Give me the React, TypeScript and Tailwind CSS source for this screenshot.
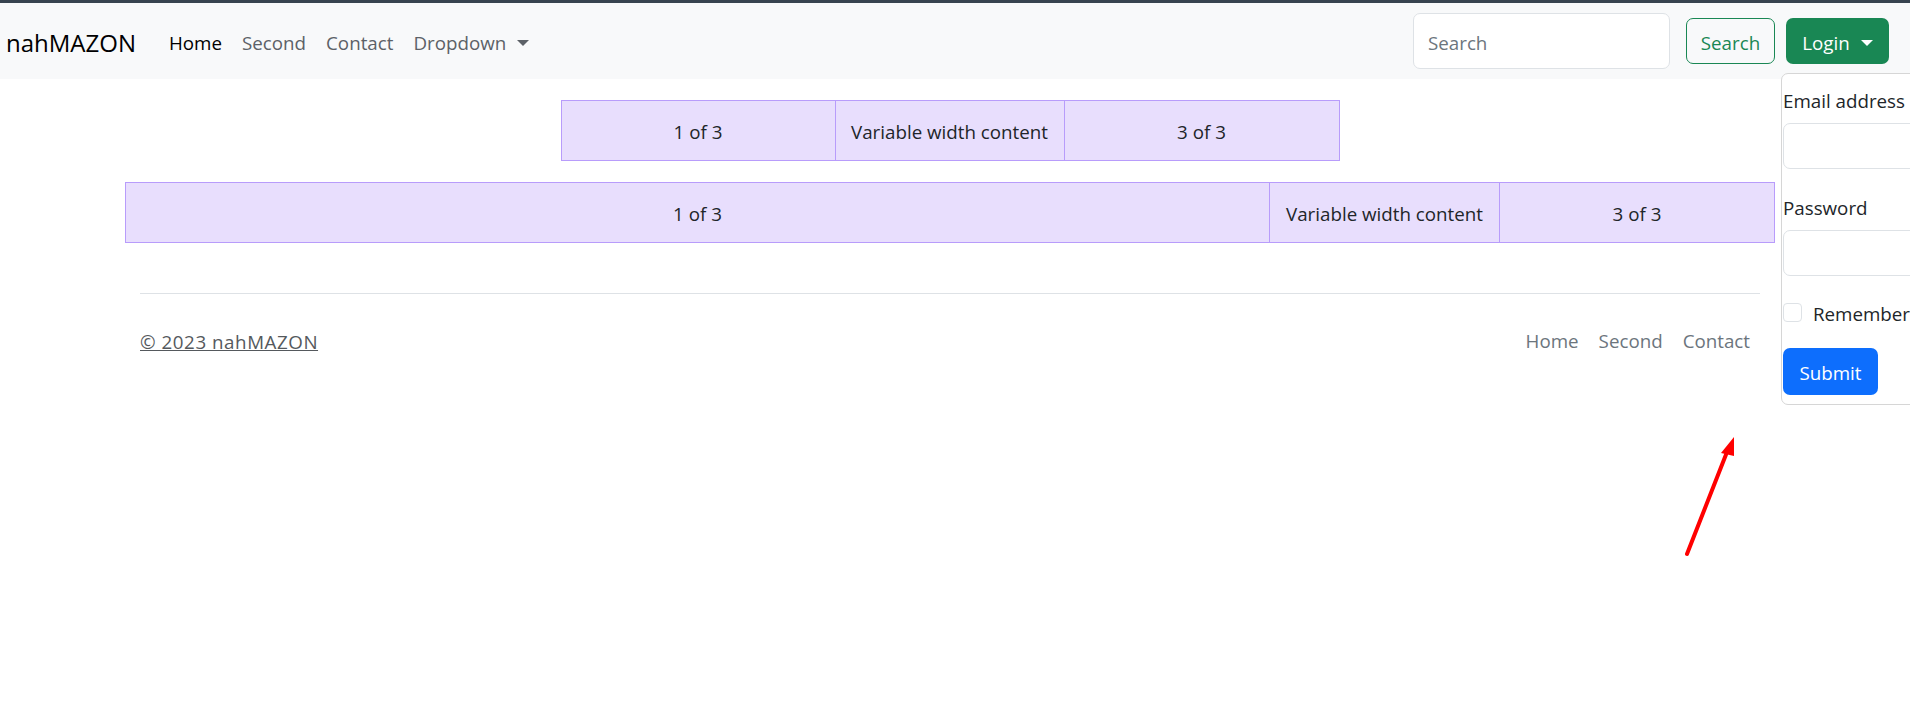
import React from "react";

const font = { fontFamily: '"Open Sans", "Noto Sans", Arial, sans-serif' };

function Caret({ gap = "ml-[11px]" }: { gap?: string }) {
  return (
    <span
      className={
        "inline-block w-0 h-0 border-l-[6px] border-r-[6px] border-t-[6px] border-l-transparent border-r-transparent border-t-current " +
        gap
      }
    />
  );
}

function Cell({ children, className = "" }: { children: React.ReactNode; className?: string }) {
  return (
    <div
      className={
        "pt-[16px] pb-[14px] text-center bg-[#e8defd] border border-[#b89cfb] text-[#212529] leading-[29px] " +
        className
      }
    >
      {children}
    </div>
  );
}

export default function App() {
  return (
    <div className="relative w-full h-[728px] bg-white overflow-hidden text-[18.75px] text-[#212529]" style={font}>
      <div className="h-[3px] bg-[#37434f]" />
      <nav className="h-[76px] bg-[#f8f9fa] flex items-center">
        <a className="pl-[6px] pt-[3px] text-[24px] text-black leading-none">nahMAZON</a>
        <ul className="flex items-center ml-[23px] pt-[4px]">
          <li className="px-[10px] text-black">Home</li>
          <li className="px-[10px] text-[#5c6167]">Second</li>
          <li className="px-[10px] text-[#5c6167]">Contact</li>
          <li className="px-[10px] text-[#5c6167] flex items-center">
            Dropdown
            <Caret gap="ml-[11px]" />
          </li>
        </ul>
        <div className="ml-auto flex items-center mr-[21px]">
          <div className="w-[257px] h-[56px] bg-white border border-[#dee2e6] rounded-[7px] flex items-center px-[14px] pt-[4px] text-[#6c757d]">
            Search
          </div>
          <button className="ml-[16px] h-[46px] w-[89px] border border-[#198754] text-[#198754] rounded-[7px] flex items-center justify-center pt-[4px]">
            Search
          </button>
          <button className="ml-[11px] h-[46px] w-[103px] bg-[#198754] text-white rounded-[7px] flex items-center justify-center pt-[4px]">
            Login
            <Caret gap="ml-[11px]" />
          </button>
        </div>
      </nav>

      <div className="ml-[125px] w-[1650px]">
        <div className="flex justify-center mt-[21px]">
          <Cell className="w-[275px]">1 of 3</Cell>
          <Cell className="w-[230px] -ml-px">Variable width content</Cell>
          <Cell className="w-[276px] -ml-px">3 of 3</Cell>
        </div>
        <div className="flex mt-[21px]">
          <Cell className="flex-1">1 of 3</Cell>
          <Cell className="w-[231px] -ml-px">Variable width content</Cell>
          <Cell className="w-[276px] -ml-px">3 of 3</Cell>
        </div>
        <div className="px-[15px]">
          <div className="mt-[50px] border-t border-[#dee2e6]" />
          <div className="flex items-center justify-between pt-[33px]">
            <a className="underline text-[#55595d] leading-[29px] tracking-[0.55px]">© 2023 nahMAZON</a>
            <ul className="flex">
              <li className="px-[10px] text-[#6c757d]">Home</li>
              <li className="px-[10px] text-[#6c757d]">Second</li>
              <li className="px-[10px] text-[#6c757d]">Contact</li>
            </ul>
          </div>
        </div>
      </div>

      {/* dropdown menu overlay */}
      <div className="absolute left-[1781px] top-[73px] w-[220px] h-[332px] bg-white border border-[#d6d6d6] rounded-[7px]">
        <div className="pt-[12px] pl-px">
          <div className="leading-[29px] text-[#212529]">Email address</div>
          <div className="mt-[8px] h-[46px] border border-[#dee2e6] rounded-[7px] bg-white" />
          <div className="mt-[22px] leading-[29px] pt-[2px] text-[#212529]">Password</div>
          <div className="mt-[8px] h-[46px] border border-[#dee2e6] rounded-[7px] bg-white" />
          <div className="mt-[22px] flex items-center h-[29px]">
            <span className="w-[19px] h-[19px] border border-[#dee2e6] rounded-[4px] bg-white" />
            <span className="ml-[11px] leading-[29px] pt-[2px]">Remember me</span>
          </div>
          <button className="mt-[21px] w-[95px] h-[47px] bg-[#0d6efd] text-white rounded-[7px] flex items-center justify-center pt-[3px]">
            Submit
          </button>
        </div>
      </div>

      {/* red annotation arrow */}
      <svg className="absolute left-0 top-0 pointer-events-none" width="1910" height="728">
        <line x1="1687" y1="554" x2="1727" y2="452" stroke="#ff0000" strokeWidth="4" strokeLinecap="round" />
        <polygon points="1734,437 1721,453 1734,456" fill="#ff0000" />
      </svg>
    </div>
  );
}
